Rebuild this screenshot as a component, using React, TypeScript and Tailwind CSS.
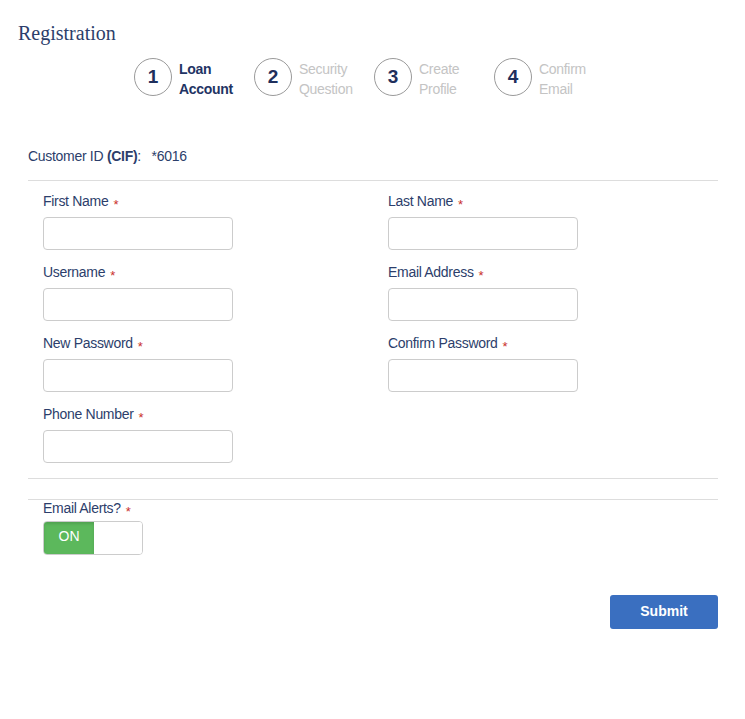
import React from 'react'

const steps = [
    { n: 1, top: 'Loan', bottom: 'Account', active: true },
    { n: 2, top: 'Security', bottom: 'Question', active: false },
    { n: 3, top: 'Create', bottom: 'Profile', active: false },
    { n: 4, top: 'Confirm', bottom: 'Email', active: false },
]

const rows = [
    ['First Name', 'Last Name'],
    ['Username', 'Email Address'],
    ['New Password', 'Confirm Password'],
    ['Phone Number', null],
]

function Req() {
    return <span className="ml-[5px] inline-block translate-y-[3px] text-[13px] leading-none text-[#c9302c]">*</span>
}

function Field({ label }: { label: string }) {
    return (
        <div className="flex w-[345px] shrink-0 flex-col">
            <label className="h-4 text-[14px] leading-4 tracking-[-0.3px] text-[#2c3e6b]">
                {label}
                <Req />
            </label>
            <input
                type="text"
                className="mt-2 h-[33px] w-[190px] rounded-[4px] border border-[#cccccc] bg-white px-2 text-[13px] outline-none"
            />
        </div>
    )
}

export default function App() {
    return (
        <div className="h-[719px] w-[745px] bg-white px-[18px] pt-[21px] font-['Liberation_Sans',Arial,sans-serif]">
            <h1 className="h-6 font-['Liberation_Serif','Times_New_Roman',serif] text-[20px] leading-6 text-[#2c3e6b]">
                Registration
            </h1>

            <div className="ml-[116px] mt-[12px] flex">
                {steps.map((s) => (
                    <div key={s.n} className="flex w-[120px] items-center gap-[7px]">
                        <div className="flex h-[38px] w-[38px] items-center justify-center rounded-full border border-[#9a9a9a] text-[19px] font-bold text-[#1f2f5c]">
                            {s.n}
                        </div>
                        <div
                            className={
                                s.active
                                    ? 'flex translate-y-[2px] flex-col text-[14px] font-bold leading-5 tracking-[-0.3px] text-[#1f3464]'
                                    : 'flex translate-y-[2px] flex-col text-[14px] leading-5 tracking-[-0.3px] text-[#c4c4c4]'
                            }
                        >
                            <span>{s.top}</span>
                            <span>{s.bottom}</span>
                        </div>
                    </div>
                ))}
            </div>

            <div className="ml-[10px] mt-[51px] h-4 text-[14px] leading-4 tracking-[-0.3px] text-[#2c3e6b]">
                Customer ID <span className="font-bold">(CIF)</span>:&nbsp;&nbsp;&nbsp;*6016
            </div>

            <div className="ml-[10px] mt-[16px] w-[690px] border-t border-[#dddddd]">
                <div className="flex flex-col gap-[14px] px-[15px] pt-[12px]">
                    {rows.map((r, i) => (
                        <div key={i} className="flex">
                            <Field label={r[0] as string} />
                            {r[1] && <Field label={r[1]} />}
                        </div>
                    ))}
                </div>

                <div className="mt-[15px] border-t border-[#dddddd]"></div>
                <div className="mt-[20px] border-t border-[#dddddd]"></div>

                <div className="px-[15px]">
                    <div className="h-4 text-[14px] leading-4 tracking-[-0.3px] text-[#2c3e6b]">
                        Email Alerts?
                        <Req />
                    </div>
                    <div className="mt-[5px] flex h-[34px] w-[100px] overflow-hidden rounded-[4px] border border-[#cccccc]">
                        <div className="flex w-[50px] items-center justify-center bg-[#5cb85c] pb-[3px] text-[14px] text-white shadow-[inset_0_2px_3px_rgba(0,0,0,0.12)]">
                            ON
                        </div>
                        <div className="flex-1 bg-white"></div>
                    </div>
                </div>

                <div className="mt-10 flex justify-end">
                    <button
                        type="button"
                        className="h-[34px] w-[108px] rounded-[3px] bg-[#3a6fc0] pb-[2px] text-[14px] font-bold text-white"
                    >
                        Submit
                    </button>
                </div>
            </div>
        </div>
    )
}
